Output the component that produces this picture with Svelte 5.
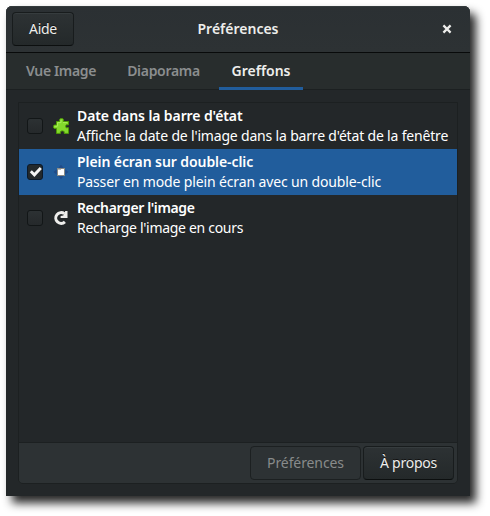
<script>
  const tabs = [
    { label: 'Vue Image', cls: 'view' },
    { label: 'Diaporama', cls: 'slides' },
    { label: 'Greffons', cls: 'plugins', active: true }
  ];

  const plugins = [
    { id: 'date', title: "Date dans la barre d'état", text: "Affiche la date de l'image dans la barre d'état de la fenêtre", on: false },
    { id: 'full', title: 'Plein écran sur double-clic', text: 'Passer en mode plein écran avec un double-clic', on: true },
    { id: 'reload', title: "Recharger l'image", text: "Recharge l'image en cours", on: false }
  ];
  let selected = $state('full');
</script>

<main>
  <section class="window">
    <header>
      <button class="btn help"><span>Aide</span></button>
      <h1><span>Préférences</span></h1>
      <button class="close" aria-label="Fermer">
        <svg width="10" height="10" viewBox="0 0 10 10"><path d="M1.4 1.4 8.6 8.6M8.6 1.4 1.4 8.6" stroke="#eeeeec" stroke-width="2.2" /></svg>
      </button>
    </header>
    <nav>
      {#each tabs as tab}
        <button class="tab {tab.cls}" class:active={tab.active}><span>{tab.label}</span></button>
      {/each}
    </nav>
    <div class="page">
      <div class="frame">
        <div class="list">
          {#each plugins as p}
            <div class="row {p.id}" class:selected={selected === p.id}>
              <span class="check" class:on={p.on}>
                {#if p.on}
                  <svg width="14" height="14" viewBox="0 0 14 14"><path d="M2.8 6.2 6.4 9.8 12.8 3" fill="none" stroke="#f4f4f3" stroke-width="2.9" /></svg>
                {/if}
              </span>
              <svg class="icon" width="16" height="16" viewBox="0 0 16 16">
                {#if p.id === 'date'}
                  <path d="M3.5 3.5H6.7V1.2C7.2.2 9.8.2 10.3 1.2V3.5H15.5V6.8H14C13.4 6.4 12.7 7 12.7 8.3C12.7 9.7 13.4 10 14 9.7H15.5V15.4H11.2V13.8C11 12.6 7.6 12.6 7.4 13.8V15.4H3.5V10.5H1.3C.2 10 .2 7.5 1.3 7H3.5Z" fill="#83d92c" stroke="#4e9a06" />
                  <path d="M4.6 8V4.6H8V2M10 4.6H14.3M1.5 8.3H4.5" fill="none" stroke="#a8ee58" />
                {:else if p.id === 'full'}
                  <path d="M8 .8 10.5 3.8H5.5ZM8 15.2 5.5 12.2H10.5ZM.6 8 3.6 5.5V10.5ZM15.4 8 12.4 10.5V5.5Z" fill="#204a87" />
                  <rect x="4.5" y="4.5" width="7" height="7" fill="#fff" stroke="#888a85" />
                  <path d="M5 5.5H8" stroke="#b9bbb7" />
                {:else}
                  <path d="M11.9 11.9A5.4 5.4 0 1 1 11.3 3.6" fill="none" stroke="#eeeeec" stroke-width="3" />
                  <path d="M14.5 1V8H7.6V6L10.3 5.5L12.3 1Z" fill="#eeeeec" />
                {/if}
              </svg>
              <div class="copy"><b>{p.title}</b><span>{p.text}</span></div>
            </div>
          {/each}
        </div>
        <footer>
          <button class="btn prefs" disabled><span>Préférences</span></button>
          <button class="btn about"><span>À propos</span></button>
        </footer>
      </div>
    </div>
  </section>
</main>

<style>
  :global(body) { background: #fff; }
  main { width: 490px; height: 516px; padding: 6px; box-sizing: border-box; overflow: hidden; }
  main, button { font: 14px/20px "Noto Sans", "Open Sans", sans-serif; color: #eeeeec; }
  button { margin: 0; padding: 0; border: 0; background: none; box-sizing: border-box; white-space: nowrap; }
  .window { width: 464px; height: 490px; display: flex; flex-direction: column; background: #232729; border-radius: 6px 6px 0 0; box-shadow: 6px 7px 10px 0 rgba(0, 0, 0, .85); }
  header { height: 47px; box-sizing: border-box; display: grid; grid-template-columns: 62px 1fr 62px; align-items: center; padding: 0 6px; border-bottom: 1px solid #080a0a; border-radius: 6px 6px 0 0; background: linear-gradient(#2b3033, #2d3234); box-shadow: inset 0 1px #343b3d; }
  h1 { margin: 0; font-size: 14px; line-height: 20px; font-weight: 600; text-align: center; }
  .btn { height: 34px; border: 1px solid #181c1d; border-bottom-color: #0c0f0f; border-radius: 4px; background: linear-gradient(#2d3234, #24292a); box-shadow: inset 0 1px #363c3e; text-shadow: 0 -1px #111; }
  .help { width: 62px; letter-spacing: -.3px; }
  .close { width: 34px; height: 34px; justify-self: end; display: grid; place-items: center; }
  nav { height: 37px; box-sizing: border-box; display: flex; padding-left: 8px; gap: 9px; background: #282d2d; border-bottom: 1px solid #1c2021; }
  .tab { height: 37px; color: #8b8e8f; font-weight: 600; border-bottom: 3px solid transparent; padding-top: 2px; }
  .view { width: 94px; letter-spacing: -.35px; }
  .slides { width: 93px; letter-spacing: -.3px; }
  .plugins { width: 84px; }
  .tab.active { color: #eeeeec; border-bottom-color: #215d9c; }
  .page { flex: 1; padding: 12px; display: flex; }
  .frame { flex: 1; border: 1px solid #1c2021; border-radius: 0 0 5px 5px; display: flex; flex-direction: column; overflow: hidden; }
  .list { flex: 1; }
  .row { height: 46px; display: flex; align-items: center; padding-left: 8px; color: #fff; }
  .selected { background: #215d9c; }
  .check { flex: none; width: 16px; height: 16px; box-sizing: border-box; border: 1px solid #121617; border-radius: 3px; background: linear-gradient(#2c3133, #25292b); display: grid; place-items: center; }
  .check.on { border-color: #0b1929; background: #24292b; }
  .icon { flex: none; margin: 0 8px 0 10px; }
  .copy { display: flex; flex-direction: column; align-items: flex-start; white-space: nowrap; }
  b { font-weight: 600; }
  .date b { letter-spacing: -.1px; }
  .full b { letter-spacing: -.08px; }
  .date span { letter-spacing: -.18px; }
  .full .copy span { letter-spacing: -.14px; }
  .reload b { letter-spacing: -.38px; }
  .reload .copy span { letter-spacing: -.3px; }
  footer { height: 41px; box-sizing: border-box; border-top: 1px solid #1c2021; background: #2d3234; display: flex; justify-content: flex-end; align-items: center; gap: 2px; padding-right: 3px; }
  .prefs { width: 111px; background: #2d3234; border-color: #1c2021; box-shadow: none; color: #888b8b; text-shadow: none; letter-spacing: -.1px; }
  .about { width: 91px; letter-spacing: -.25px; }
</style>
